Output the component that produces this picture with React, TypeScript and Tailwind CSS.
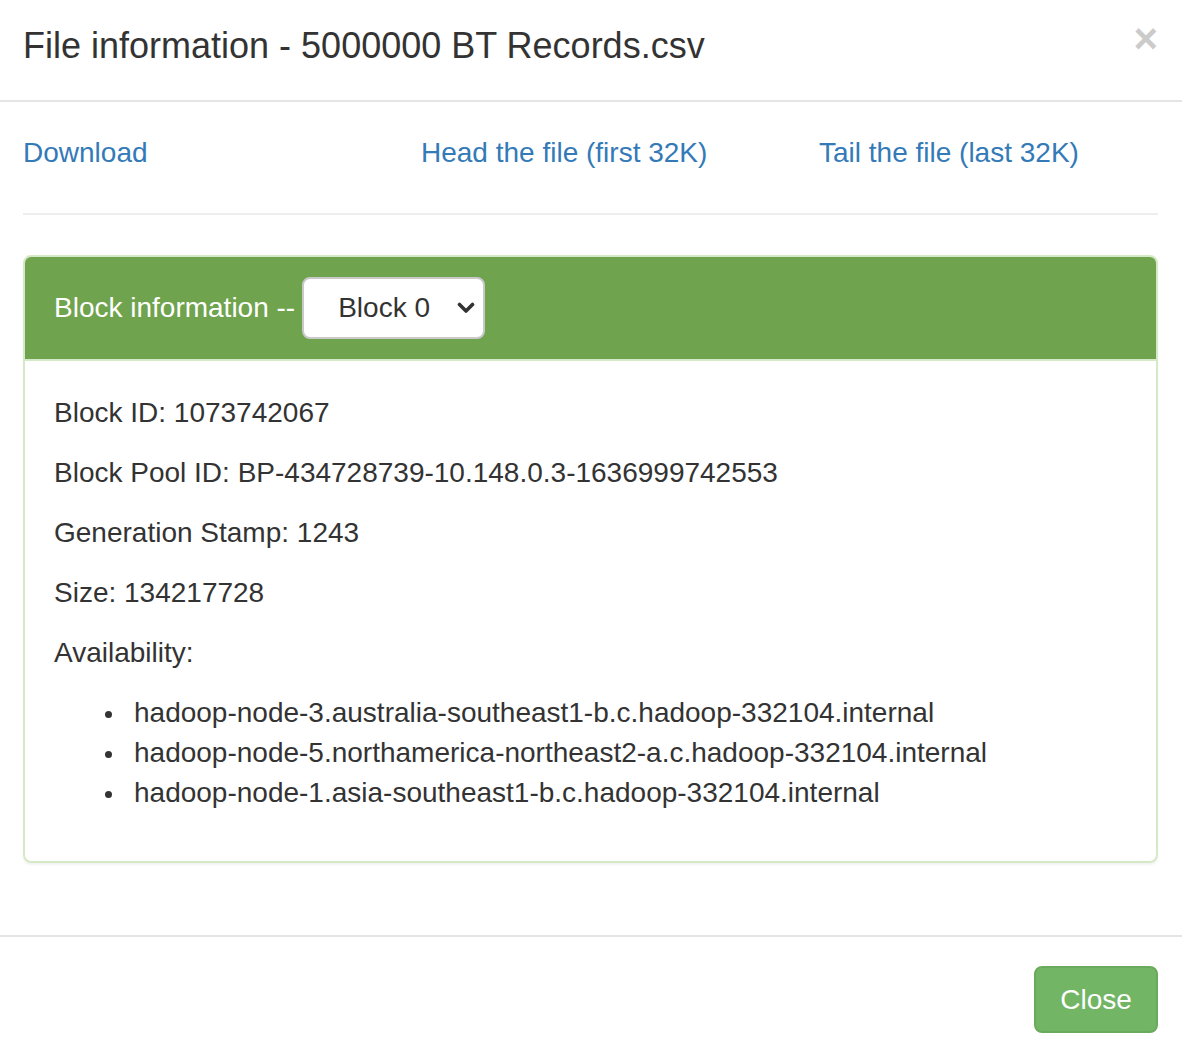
import type { FC } from "react";

const blockFacts = [
  { label: "Block ID", value: "1073742067" },
  { label: "Block Pool ID", value: "BP-434728739-10.148.0.3-1636999742553" },
  { label: "Generation Stamp", value: "1243" },
  { label: "Size", value: "134217728" },
];

const nodes = [
  "hadoop-node-3.australia-southeast1-b.c.hadoop-332104.internal",
  "hadoop-node-5.northamerica-northeast2-a.c.hadoop-332104.internal",
  "hadoop-node-1.asia-southeast1-b.c.hadoop-332104.internal",
];

const links = ["Download", "Head the file (first 32K)", "Tail the file (last 32K)"];

const App: FC = () => {
  return (
    <div
      className="w-[1182px] h-[1050px] bg-white text-[#333] overflow-hidden"
      style={{ fontFamily: '"Liberation Sans", Arial, sans-serif' }}
    >
      {/* header */}
      <div className="h-[102px] border-b-2 border-[#e5e5e5] pl-[23px] pr-[24px] pt-[20px] flex items-start justify-between">
        <h4 className="text-[36px] leading-[51px] font-normal">
          File information - 5000000 BT Records.csv
        </h4>
        <button className="text-[42px] leading-none font-bold text-black opacity-20 mt-[-2px]">
          ×
        </button>
      </div>

      {/* body */}
      <div className="pl-[23px] pr-[24px] pt-[31px] pb-[32px]">
        <div className="grid grid-cols-[398px_398px_1fr] text-[28px] leading-[40px]">
          {links.map((l) => (
            <a key={l} href="#" className="text-[#337ab7]">
              {l}
            </a>
          ))}
        </div>
        <hr className="my-[40px] border-t-2 border-[#eee]" />

        <div className="mb-[40px] border-2 border-[#d6e9c6] rounded-[8px] shadow-[0_2px_2px_rgba(0,0,0,0.05)]">
          <div className="bg-[#6fa34d] rounded-t-[6px] border-b-2 border-[#d6e9c6] pl-[29px] py-[20px] flex items-center gap-[7px] text-white text-[28px]">
            <span>Block information --</span>
            <div className="w-[183px] h-[62px] bg-white border-2 border-[#c9c9c9] rounded-[8px] flex items-center justify-between pl-[34px] pr-[8px] text-[#333]">
              <span>Block 0</span>
              <svg width="18" height="12" viewBox="0 0 18 12">
                <path
                  d="M2.5 2.5 L9 9 L15.5 2.5"
                  fill="none"
                  stroke="#333"
                  strokeWidth="3.6"
                  strokeLinecap="round"
                  strokeLinejoin="round"
                />
              </svg>
            </div>
          </div>
          <div className="px-[29px] pt-[32px] pb-[28px] text-[28px] leading-[40px]">
            {blockFacts.map((f) => (
              <p key={f.label} className="mb-[20px]">
                {f.label}: {f.value}
              </p>
            ))}
            <p className="mb-[20px]">Availability:</p>
            <ul className="pl-[51px] mb-[20px]">
              {nodes.map((n) => (
                <li key={n} className="flex items-center">
                  <span className="w-[7px] h-[7px] rounded-full bg-[#333] mr-[22px] mt-[3px] shrink-0" />
                  <span>{n}</span>
                </li>
              ))}
            </ul>
          </div>
        </div>
      </div>

      {/* footer */}
      <div className="border-t-2 border-[#e5e5e5] pt-[29px] pr-[24px] flex justify-end">
        <button className="w-[124px] h-[67px] rounded-[8px] bg-[#72b564] border-2 border-[#6aaa5c] text-white text-[28px]">
          Close
        </button>
      </div>
    </div>
  );
};

export default App;
